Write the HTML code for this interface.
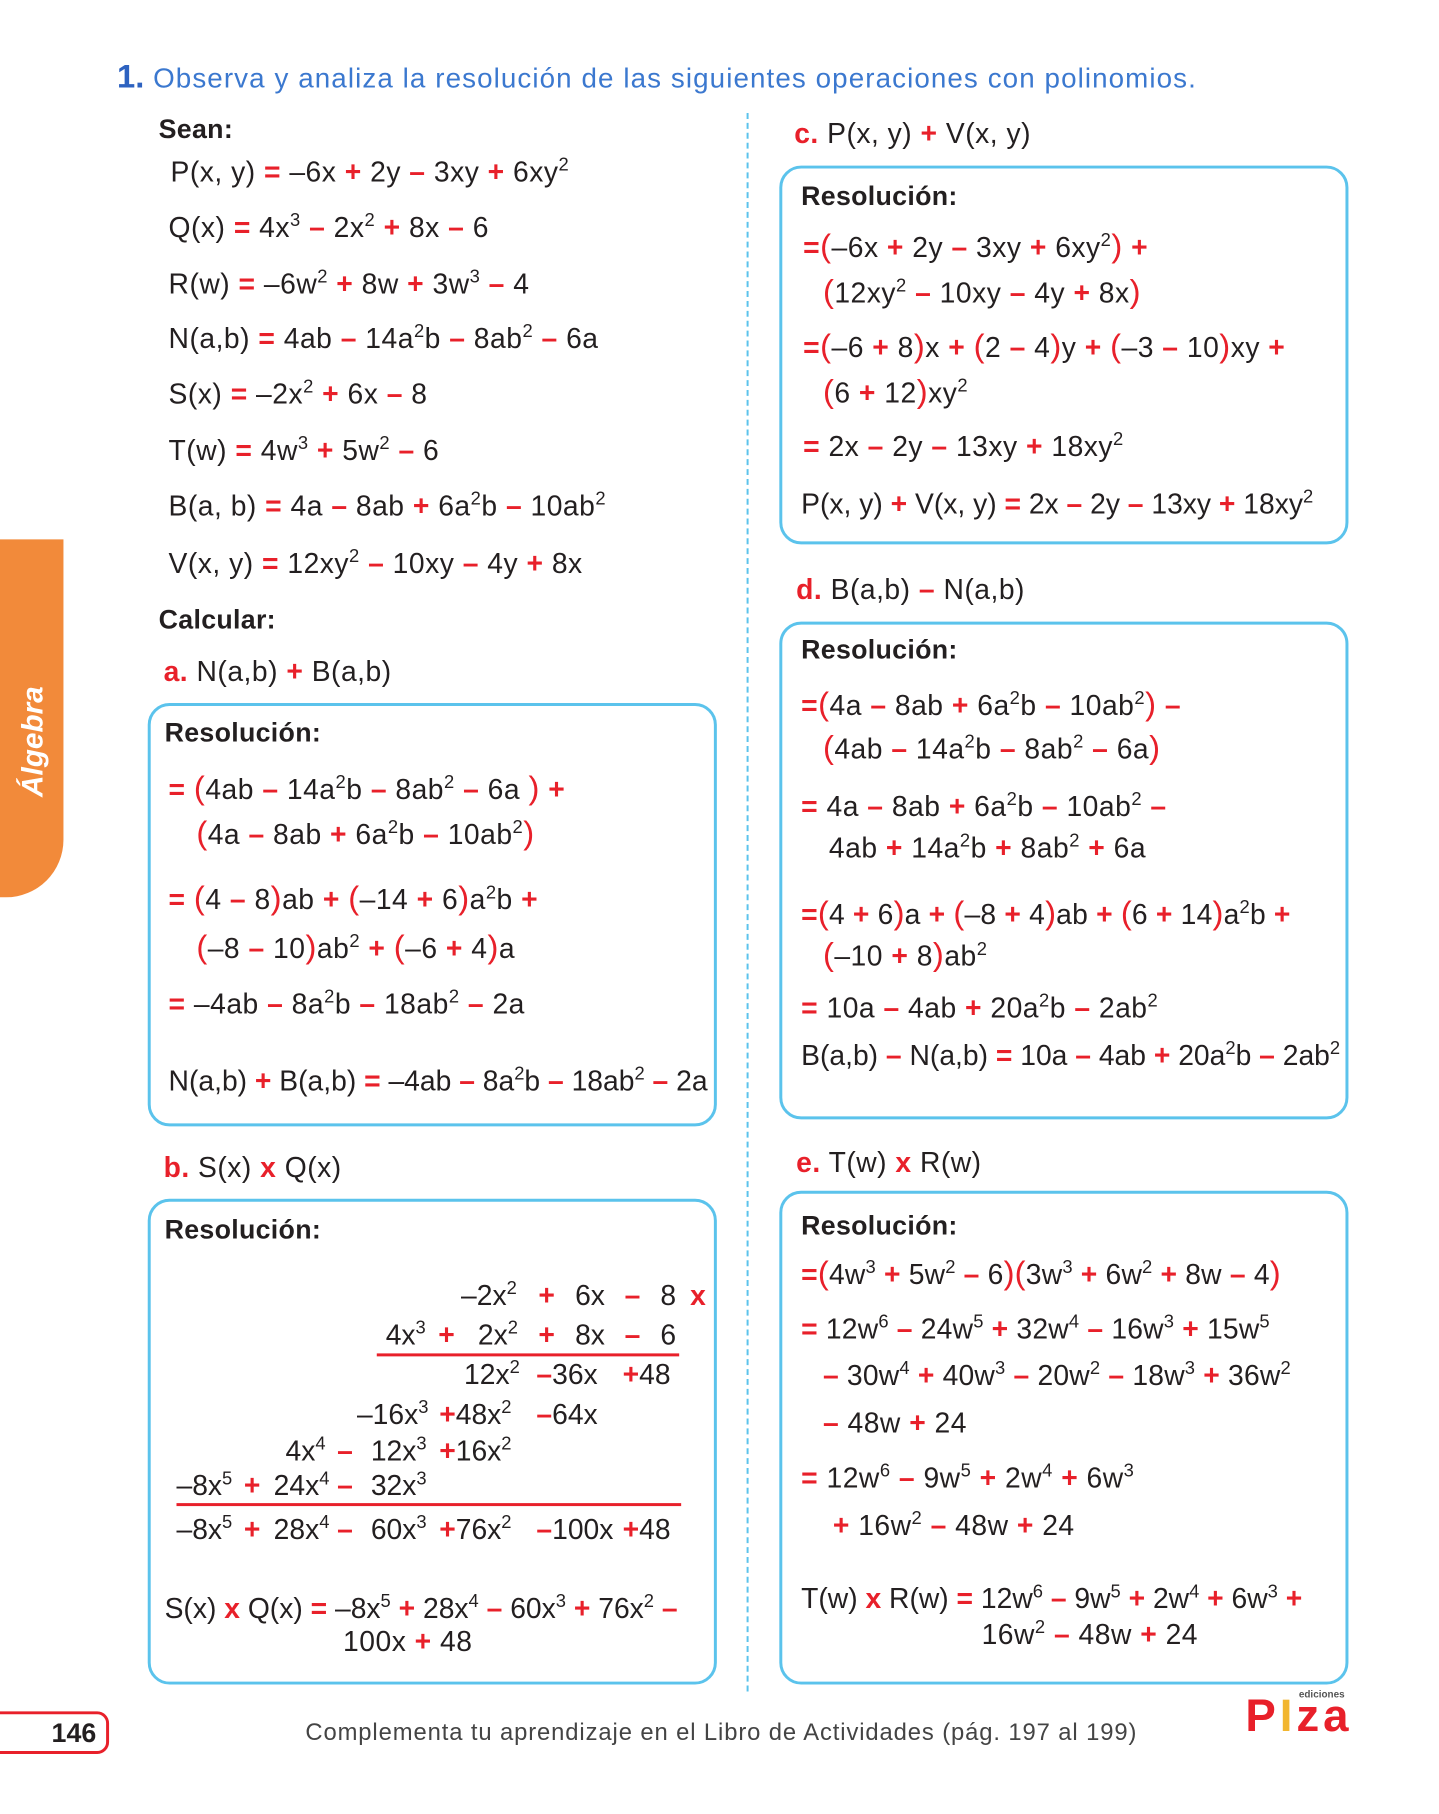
<!DOCTYPE html>
<html><head><meta charset="utf-8"><style>
body{margin:0;width:1439px;height:1800px;position:relative;background:#fff;font-family:"Liberation Sans",sans-serif;color:#231f20;overflow:hidden}
#w{position:absolute;left:0;top:0;width:1460px;height:1830px;transform:scale(0.9915);transform-origin:0 0}
.l{position:absolute;font-size:28.5px;line-height:34px;white-space:nowrap;letter-spacing:0.5px}
.r{color:#e8202a;font-weight:bold}
.p{color:#e8202a;font-size:33px}
sup{font-size:65%;vertical-align:0;position:relative;top:-0.6em;line-height:0}
.h{font-weight:bold;font-size:27px;letter-spacing:0.3px}
.box{position:absolute;border:3px solid #5bc3ec;border-radius:22px;box-sizing:border-box}
.lt{color:#e8202a;font-weight:bold}
.m{position:absolute;font-size:28.5px;line-height:34px;white-space:nowrap}
</style></head><body><div id="w">

<div class="l" style="left:118px;top:60px;font-size:28px;color:#3b78cf;letter-spacing:1.1px"><b style="font-size:33px;color:#2d62c0;letter-spacing:0">1.</b> Observa y analiza la resolución de las siguientes operaciones con polinomios.</div>

<div style="position:absolute;left:753px;top:114px;height:1592px;border-left:2px dashed #5bc3ec"></div>

<div style="position:absolute;left:0;top:544px;width:64px;height:361px;background:#f28a3a;border-radius:0 0 58px 0"></div>
<div style="position:absolute;left:34px;top:748px;transform:translate(-50%,-50%) rotate(-90deg);color:#fff;font-weight:bold;font-style:italic;font-size:30px;white-space:nowrap">Álgebra</div>

<div class="l h" style="left:160px;top:113px">Sean:</div>
<div class="l" style="left:172px;top:157px">P(x, y) <span class="r">=</span> –6x <span class="r">+</span> 2y <span class="r">–</span> 3xy <span class="r">+</span> 6xy<sup>2</sup></div>
<div class="l" style="left:170px;top:213px">Q(x) <span class="r">=</span> 4x<sup>3</sup> <span class="r">–</span> 2x<sup>2</sup> <span class="r">+</span> 8x <span class="r">–</span> 6</div>
<div class="l" style="left:170px;top:270px">R(w) <span class="r">=</span> –6w<sup>2</sup> <span class="r">+</span> 8w <span class="r">+</span> 3w<sup>3</sup> <span class="r">–</span> 4</div>
<div class="l" style="left:170px;top:325px">N(a,b) <span class="r">=</span> 4ab <span class="r">–</span> 14a<sup>2</sup>b <span class="r">–</span> 8ab<sup>2</sup> <span class="r">–</span> 6a</div>
<div class="l" style="left:170px;top:381px">S(x) <span class="r">=</span> –2x<sup>2</sup> <span class="r">+</span> 6x <span class="r">–</span> 8</div>
<div class="l" style="left:170px;top:438px">T(w) <span class="r">=</span> 4w<sup>3</sup> <span class="r">+</span> 5w<sup>2</sup> <span class="r">–</span> 6</div>
<div class="l" style="left:170px;top:494px">B(a, b) <span class="r">=</span> 4a <span class="r">–</span> 8ab <span class="r">+</span> 6a<sup>2</sup>b <span class="r">–</span> 10ab<sup>2</sup></div>
<div class="l" style="left:170px;top:552px">V(x, y) <span class="r">=</span> 12xy<sup>2</sup> <span class="r">–</span> 10xy <span class="r">–</span> 4y <span class="r">+</span> 8x</div>
<div class="l h" style="left:160px;top:608px">Calcular:</div>
<div class="l" style="left:165px;top:661px"><span class="lt">a.</span> N(a,b) <span class="r">+</span> B(a,b)</div>

<div class="box" style="left:149px;top:709px;width:574px;height:427px"></div>
<div class="l h" style="left:166px;top:722px">Resolución:</div>
<div class="l" style="left:170px;top:778px"><span class="r">=</span> <span class="p">(</span>4ab <span class="r">–</span> 14a<sup>2</sup>b <span class="r">–</span> 8ab<sup>2</sup> <span class="r">–</span> 6a <span class="p">)</span> <span class="r">+</span></div>
<div class="l" style="left:198px;top:823px"><span class="p">(</span>4a <span class="r">–</span> 8ab <span class="r">+</span> 6a<sup>2</sup>b <span class="r">–</span> 10ab<sup>2</sup><span class="p">)</span></div>
<div class="l" style="left:170px;top:889px"><span class="r">=</span> <span class="p">(</span>4 <span class="r">–</span> 8<span class="p">)</span>ab <span class="r">+</span> <span class="p">(</span>–14 <span class="r">+</span> 6<span class="p">)</span>a<sup>2</sup>b <span class="r">+</span></div>
<div class="l" style="left:198px;top:938px"><span class="p">(</span>–8 <span class="r">–</span> 10<span class="p">)</span>ab<sup>2</sup> <span class="r">+</span> <span class="p">(</span>–6 <span class="r">+</span> 4<span class="p">)</span>a</div>
<div class="l" style="left:170px;top:996px"><span class="r">=</span> –4ab <span class="r">–</span> 8a<sup>2</sup>b <span class="r">–</span> 18ab<sup>2</sup> <span class="r">–</span> 2a</div>
<div class="l" style="left:170px;top:1074px;letter-spacing:0">N(a,b) <span class="r">+</span> B(a,b) <span class="r">=</span> –4ab <span class="r">–</span> 8a<sup>2</sup>b <span class="r">–</span> 18ab<sup>2</sup> <span class="r">–</span> 2a</div>

<div class="l" style="left:165px;top:1161px"><span class="lt">b.</span> S(x) <span class="r">x</span> Q(x)</div>
<div class="box" style="left:149px;top:1209px;width:574px;height:490px"></div>
<div class="l h" style="left:166px;top:1223px">Resolución:</div>

<div class="m" style="left:465px;top:1290px">–2x<sup>2</sup></div><div class="m r" style="left:543px;top:1290px">+</div><div class="m" style="left:580px;top:1290px">6x</div><div class="m r" style="left:630px;top:1290px">–</div><div class="m" style="left:666px;top:1290px">8</div><div class="m r" style="left:696px;top:1290px">x</div>
<div class="m" style="left:389px;top:1330px">4x<sup>3</sup></div><div class="m r" style="left:442px;top:1330px">+</div><div class="m" style="left:482px;top:1330px">2x<sup>2</sup></div><div class="m r" style="left:543px;top:1330px">+</div><div class="m" style="left:580px;top:1330px">8x</div><div class="m r" style="left:630px;top:1330px">–</div><div class="m" style="left:666px;top:1330px">6</div>
<div style="position:absolute;left:380px;top:1365px;width:305px;height:3px;background:#e8202a"></div>
<div class="m" style="left:468px;top:1370px">12x<sup>2</sup></div><div class="m" style="left:541px;top:1370px"><span class="r">–</span>36x</div><div class="m" style="left:628px;top:1370px"><span class="r">+</span>48</div>
<div class="m" style="left:360px;top:1410px">–16x<sup>3</sup></div><div class="m" style="left:443px;top:1410px"><span class="r">+</span>48x<sup>2</sup></div><div class="m" style="left:541px;top:1410px"><span class="r">–</span>64x</div>
<div class="m" style="left:288px;top:1447px">4x<sup>4</sup></div><div class="m r" style="left:340px;top:1447px">–</div><div class="m" style="left:374px;top:1447px">12x<sup>3</sup></div><div class="m" style="left:443px;top:1447px"><span class="r">+</span>16x<sup>2</sup></div>
<div class="m" style="left:178px;top:1482px">–8x<sup>5</sup></div><div class="m r" style="left:246px;top:1482px">+</div><div class="m" style="left:276px;top:1482px">24x<sup>4</sup></div><div class="m r" style="left:340px;top:1482px">–</div><div class="m" style="left:374px;top:1482px">32x<sup>3</sup></div>
<div style="position:absolute;left:178px;top:1516px;width:509px;height:3px;background:#e8202a"></div>
<div class="m" style="left:178px;top:1526px">–8x<sup>5</sup></div><div class="m r" style="left:246px;top:1526px">+</div><div class="m" style="left:276px;top:1526px">28x<sup>4</sup></div><div class="m r" style="left:340px;top:1526px">–</div><div class="m" style="left:374px;top:1526px">60x<sup>3</sup></div><div class="m" style="left:443px;top:1526px"><span class="r">+</span>76x<sup>2</sup></div><div class="m" style="left:541px;top:1526px"><span class="r">–</span>100x</div><div class="m" style="left:628px;top:1526px"><span class="r">+</span>48</div>

<div class="l" style="left:166px;top:1606px;letter-spacing:0">S(x) <span class="r">x</span> Q(x) <span class="r">=</span> –8x<sup>5</sup> <span class="r">+</span> 28x<sup>4</sup> <span class="r">–</span> 60x<sup>3</sup> <span class="r">+</span> 76x<sup>2</sup> <span class="r">–</span></div>
<div class="l" style="left:346px;top:1639px">100x <span class="r">+</span> 48</div>

<div class="l" style="left:801px;top:118px"><span class="lt">c.</span> P(x, y) <span class="r">+</span> V(x, y)</div>
<div class="box" style="left:786px;top:167px;width:574px;height:382px"></div>
<div class="l h" style="left:808px;top:181px">Resolución:</div>
<div class="l" style="left:810px;top:231px"><span class="r">=</span><span class="p">(</span>–6x <span class="r">+</span> 2y <span class="r">–</span> 3xy <span class="r">+</span> 6xy<sup>2</sup><span class="p">)</span> <span class="r">+</span></div>
<div class="l" style="left:830px;top:277px"><span class="p">(</span>12xy<sup>2</sup> <span class="r">–</span> 10xy <span class="r">–</span> 4y <span class="r">+</span> 8x<span class="p">)</span></div>
<div class="l" style="left:810px;top:332px"><span class="r">=</span><span class="p">(</span>–6 <span class="r">+</span> 8<span class="p">)</span>x <span class="r">+</span> <span class="p">(</span>2 <span class="r">–</span> 4<span class="p">)</span>y <span class="r">+</span> <span class="p">(</span>–3 <span class="r">–</span> 10<span class="p">)</span>xy <span class="r">+</span></div>
<div class="l" style="left:830px;top:378px"><span class="p">(</span>6 <span class="r">+</span> 12<span class="p">)</span>xy<sup>2</sup></div>
<div class="l" style="left:810px;top:434px"><span class="r">=</span> 2x <span class="r">–</span> 2y <span class="r">–</span> 13xy <span class="r">+</span> 18xy<sup>2</sup></div>
<div class="l" style="left:808px;top:492px;letter-spacing:0">P(x, y) <span class="r">+</span> V(x, y) <span class="r">=</span> 2x <span class="r">–</span> 2y <span class="r">–</span> 13xy <span class="r">+</span> 18xy<sup>2</sup></div>

<div class="l" style="left:803px;top:578px"><span class="lt">d.</span> B(a,b) <span class="r">–</span> N(a,b)</div>
<div class="box" style="left:786px;top:627px;width:574px;height:502px"></div>
<div class="l h" style="left:808px;top:638px">Resolución:</div>
<div class="l" style="left:808px;top:693px"><span class="r">=</span><span class="p">(</span>4a <span class="r">–</span> 8ab <span class="r">+</span> 6a<sup>2</sup>b <span class="r">–</span> 10ab<sup>2</sup><span class="p">)</span> <span class="r">–</span></div>
<div class="l" style="left:830px;top:737px"><span class="p">(</span>4ab <span class="r">–</span> 14a<sup>2</sup>b <span class="r">–</span> 8ab<sup>2</sup> <span class="r">–</span> 6a<span class="p">)</span></div>
<div class="l" style="left:808px;top:797px"><span class="r">=</span> 4a <span class="r">–</span> 8ab <span class="r">+</span> 6a<sup>2</sup>b <span class="r">–</span> 10ab<sup>2</sup> <span class="r">–</span></div>
<div class="l" style="left:836px;top:839px">4ab <span class="r">+</span> 14a<sup>2</sup>b <span class="r">+</span> 8ab<sup>2</sup> <span class="r">+</span> 6a</div>
<div class="l" style="left:808px;top:904px;letter-spacing:0.2px"><span class="r">=</span><span class="p">(</span>4 <span class="r">+</span> 6<span class="p">)</span>a <span class="r">+</span> <span class="p">(</span>–8 <span class="r">+</span> 4<span class="p">)</span>ab <span class="r">+</span> <span class="p">(</span>6 <span class="r">+</span> 14<span class="p">)</span>a<sup>2</sup>b <span class="r">+</span></div>
<div class="l" style="left:830px;top:946px"><span class="p">(</span>–10 <span class="r">+</span> 8<span class="p">)</span>ab<sup>2</sup></div>
<div class="l" style="left:808px;top:1000px"><span class="r">=</span> 10a <span class="r">–</span> 4ab <span class="r">+</span> 20a<sup>2</sup>b <span class="r">–</span> 2ab<sup>2</sup></div>
<div class="l" style="left:808px;top:1048px;letter-spacing:0">B(a,b) <span class="r">–</span> N(a,b) <span class="r">=</span> 10a <span class="r">–</span> 4ab <span class="r">+</span> 20a<sup>2</sup>b <span class="r">–</span> 2ab<sup>2</sup></div>

<div class="l" style="left:803px;top:1156px"><span class="lt">e.</span> T(w) <span class="r">x</span> R(w)</div>
<div class="box" style="left:786px;top:1201px;width:574px;height:498px"></div>
<div class="l h" style="left:808px;top:1219px">Resolución:</div>
<div class="l" style="left:808px;top:1267px;letter-spacing:0.2px"><span class="r">=</span><span class="p">(</span>4w<sup>3</sup> <span class="r">+</span> 5w<sup>2</sup> <span class="r">–</span> 6<span class="p">)</span><span class="p">(</span>3w<sup>3</sup> <span class="r">+</span> 6w<sup>2</sup> <span class="r">+</span> 8w <span class="r">–</span> 4<span class="p">)</span></div>
<div class="l" style="left:808px;top:1324px;letter-spacing:0.2px"><span class="r">=</span> 12w<sup>6</sup> <span class="r">–</span> 24w<sup>5</sup> <span class="r">+</span> 32w<sup>4</sup> <span class="r">–</span> 16w<sup>3</sup> <span class="r">+</span> 15w<sup>5</sup></div>
<div class="l" style="left:830px;top:1371px;letter-spacing:0.2px"><span class="r">–</span> 30w<sup>4</sup> <span class="r">+</span> 40w<sup>3</sup> <span class="r">–</span> 20w<sup>2</sup> <span class="r">–</span> 18w<sup>3</sup> <span class="r">+</span> 36w<sup>2</sup></div>
<div class="l" style="left:830px;top:1419px"><span class="r">–</span> 48w <span class="r">+</span> 24</div>
<div class="l" style="left:808px;top:1474px"><span class="r">=</span> 12w<sup>6</sup> <span class="r">–</span> 9w<sup>5</sup> <span class="r">+</span> 2w<sup>4</sup> <span class="r">+</span> 6w<sup>3</sup></div>
<div class="l" style="left:840px;top:1522px"><span class="r">+</span> 16w<sup>2</sup> <span class="r">–</span> 48w <span class="r">+</span> 24</div>
<div class="l" style="left:808px;top:1596px;letter-spacing:0">T(w) <span class="r">x</span> R(w) <span class="r">=</span> 12w<sup>6</sup> <span class="r">–</span> 9w<sup>5</sup> <span class="r">+</span> 2w<sup>4</sup> <span class="r">+</span> 6w<sup>3</sup> <span class="r">+</span></div>
<div class="l" style="left:990px;top:1632px">16w<sup>2</sup> <span class="r">–</span> 48w <span class="r">+</span> 24</div>

<div style="position:absolute;left:-20px;top:1726px;width:130px;height:43px;border:3px solid #e8202a;border-radius:0 12px 12px 0;box-sizing:border-box"></div>
<div class="l" style="left:52px;top:1731px;font-weight:bold;font-size:27px;letter-spacing:0">146</div>
<div class="l" style="left:308px;top:1731px;font-size:24px;color:#444;letter-spacing:0.9px">Complementa tu aprendizaje en el Libro de Actividades (pág. 197 al 199)</div>
<div style="position:absolute;left:1310px;top:1704px;font-size:10px;font-weight:bold;color:#555">ediciones</div>
<div style="position:absolute;left:1256px;top:1710px;font-size:46px;line-height:40px;font-weight:bold;color:#e8202a;letter-spacing:4px">P<span style="color:#f2b630">I</span>za</div>
</div></body></html>
